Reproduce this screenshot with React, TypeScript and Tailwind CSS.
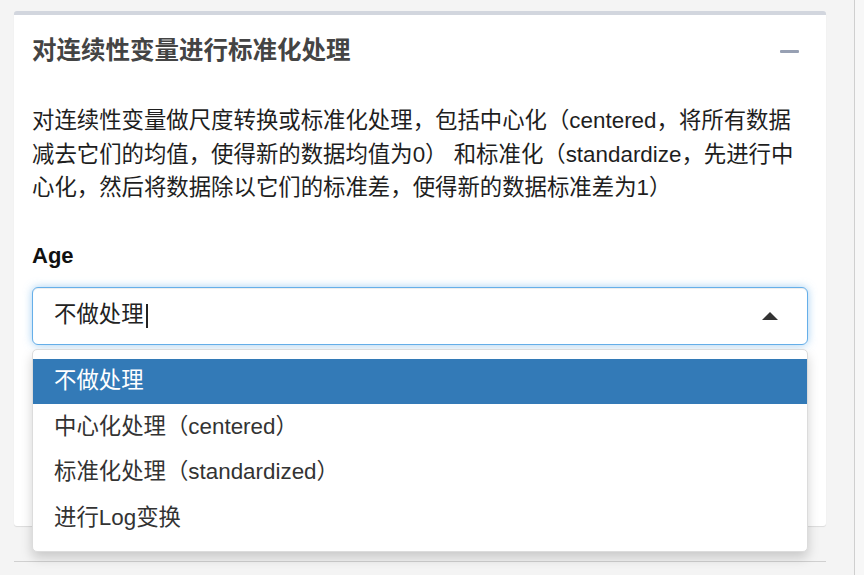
import React from 'react';

const OPTIONS = ['不做处理', '中心化处理（centered）', '标准化处理（standardized）', '进行Log变换'];

export default function App() {
  return (
    <div className="flex h-[575px] w-[864px] overflow-hidden bg-[#f4f4f4] font-['Liberation_Sans','Noto_Sans_CJK_SC',sans-serif] text-[#333]">
      <div className="w-[855px] shrink-0 border-r border-[#cfcfcf] pl-[14px] pr-[28px] pt-[11px]">
        {/* box */}
        <div className="rounded-[3px] border-t-4 border-[#d2d6de] bg-white shadow-[0_1px_1px_rgba(0,0,0,0.1)]">
          <div className="flex h-[72px] items-center justify-between pl-[18px] pr-[27px]">
            <h3 className="text-[24.5px] font-bold leading-none text-[#444]">对连续性变量进行标准化处理</h3>
            <div className="h-[3px] w-[19px] rounded-[1px] bg-[#97a0b3]" />
          </div>

          <div className="px-[18px] pt-[17px]">
            <p className="whitespace-nowrap text-[22.4px] leading-[33.5px] text-[#1e1e1e]">
              对连续性变量做尺度转换或标准化处理，包括中心化（centered，将所有数据
              <br />
              减去它们的均值，使得新的数据均值为0） 和标准化（standardize，先进行中
              <br />
              心化，然后将数据除以它们的标准差，使得新的数据标准差为1）
            </p>

            <label className="mt-[36px] block text-[22px] font-bold leading-[30px] text-[#111]">Age</label>

            <div className="relative mt-[16px]">
              <div className="flex h-[58px] items-center justify-between rounded-[6px] border border-[#66afe9] bg-white pl-[21px] pr-[29px] shadow-[inset_0_1px_1px_rgba(0,0,0,0.075),0_0_8px_rgba(102,175,233,0.6)]">
                <div className="flex items-center">
                  <span className="text-[22.4px] leading-none text-[#222]">不做处理</span>
                  <span className="ml-[2px] h-[24px] w-[2px] bg-[#222]" />
                </div>
                <span className="h-0 w-0 border-x-[8px] border-b-[8px] border-x-transparent border-b-[#333]" />
              </div>

              {/* dropdown menu */}
              <div className="absolute left-0 right-0 top-[62px] z-10 rounded-[5px] border border-[#dcdcdc] bg-white pb-[10px] pt-[9px] shadow-[0_6px_12px_rgba(0,0,0,0.175)]">
                {OPTIONS.map((opt, i) => (
                  <div
                    key={opt}
                    className={
                      i === 0
                        ? 'flex h-[45.5px] items-center bg-[#337ab7] pl-[21px] text-[22.4px] text-white'
                        : 'flex h-[45.5px] items-center pl-[21px] text-[22.4px] text-[#333]'
                    }
                  >
                    {opt}
                  </div>
                ))}
              </div>
            </div>

            <div className="h-[181px]" />
          </div>
        </div>

        <div className="mt-[35px] border-t border-[#d0d0d0]" />
      </div>
      <div className="flex-1 bg-[#f7f7f7]" />
    </div>
  );
}
